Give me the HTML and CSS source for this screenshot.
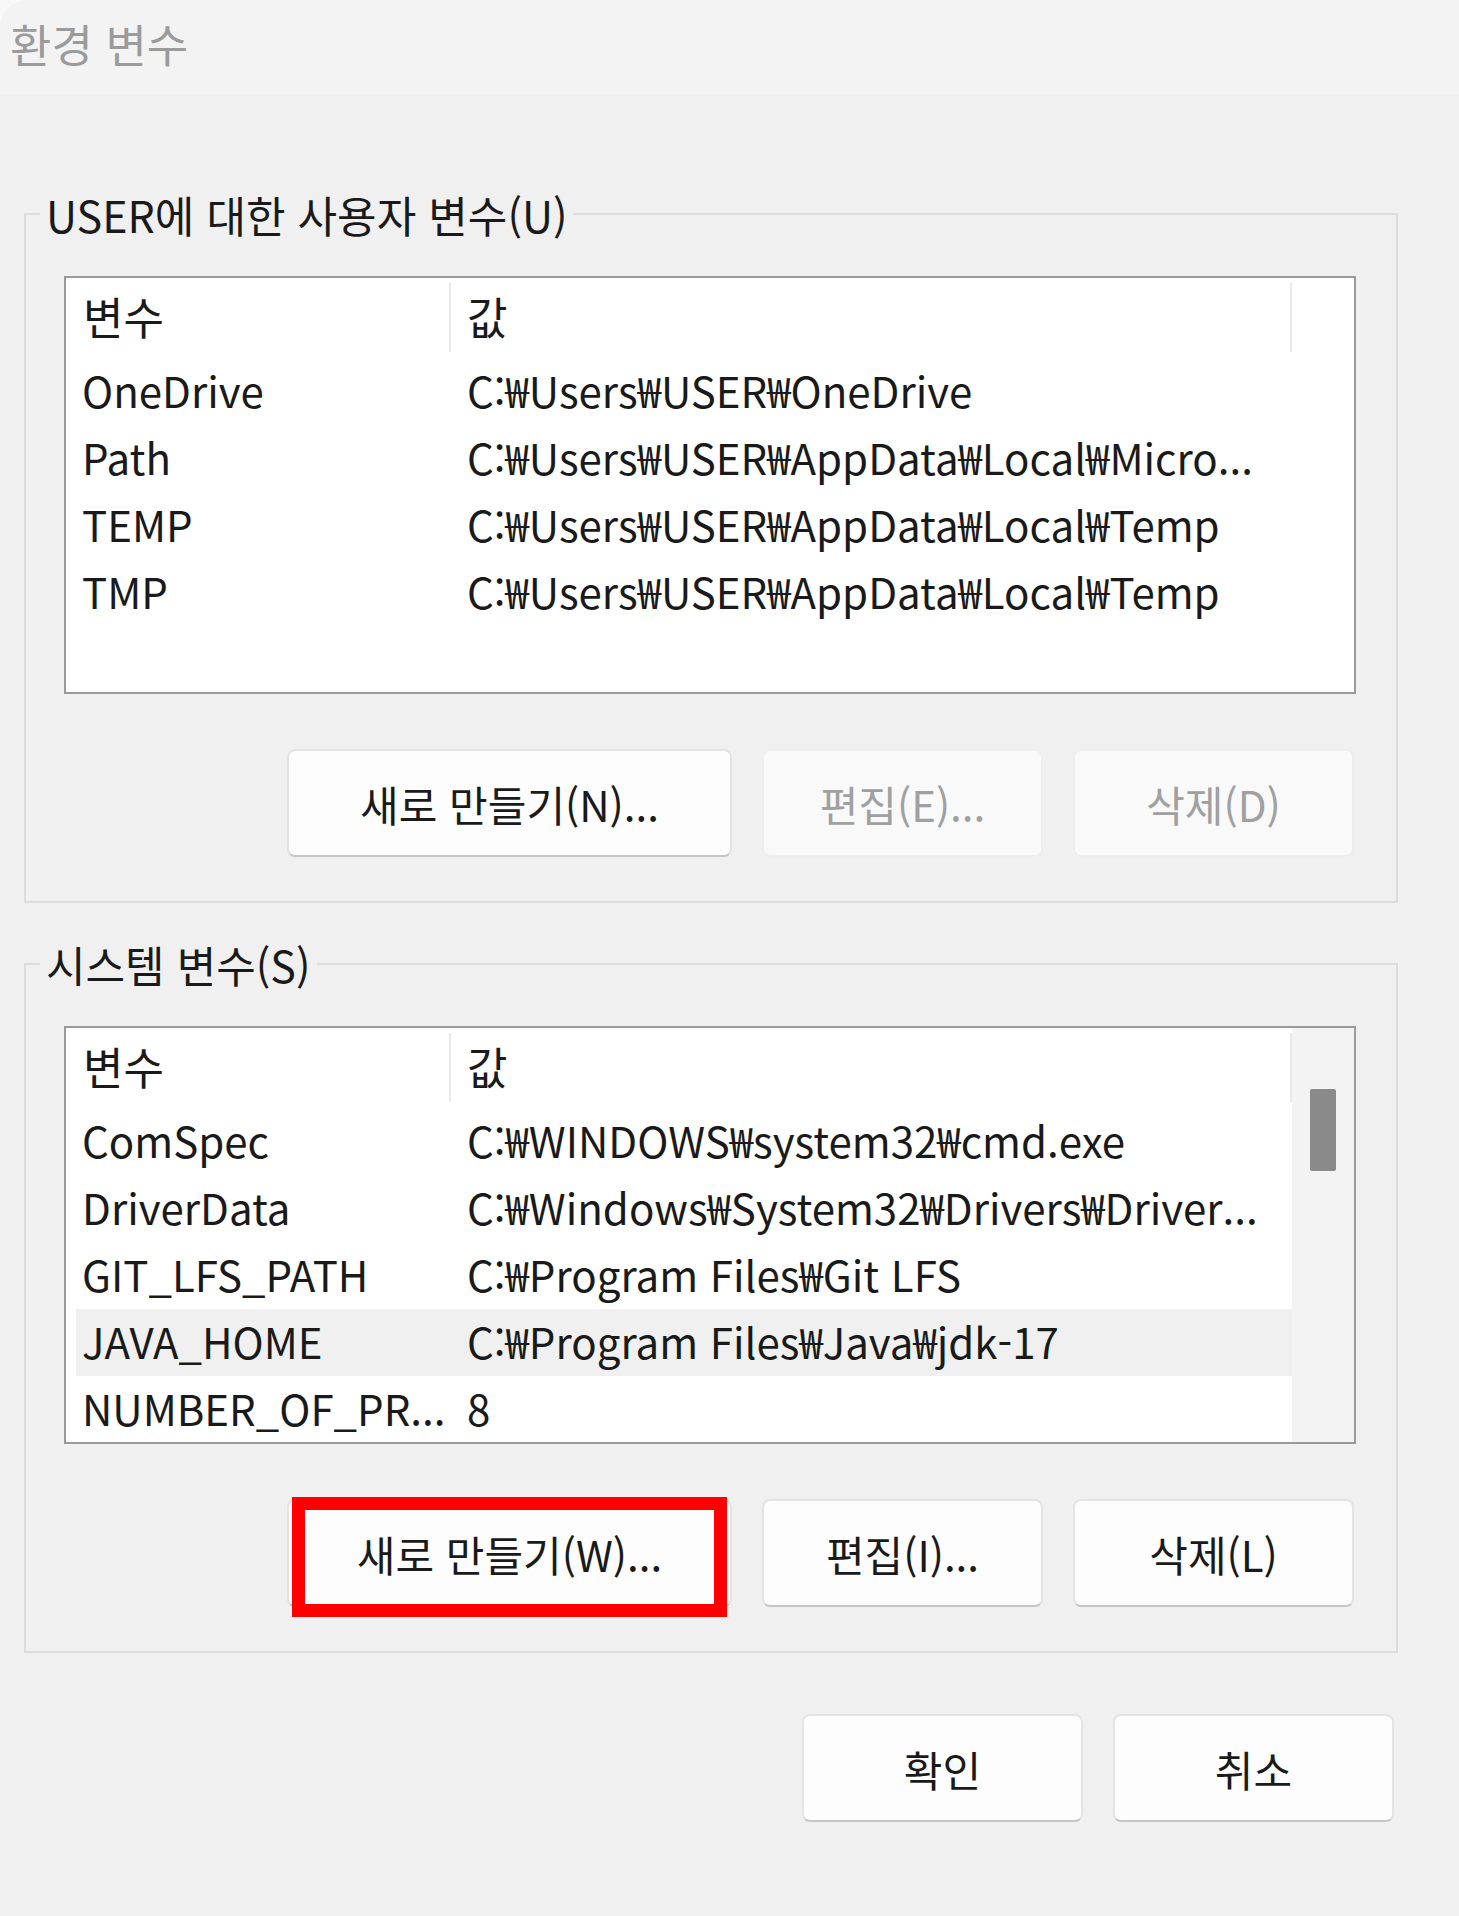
FILE: index.html
```html
<!DOCTYPE html>
<html lang="ko">
<head>
    <meta charset="UTF-8">
    <meta name="viewport" content="width=device-width, initial-scale=1.0">
    <title>환경 변수</title>
    <link rel="stylesheet" href="styles.css">
</head>
<body>
    <div class="window">
        <div class="titlebar">
            <span class="title">환경 변수</span>
        </div>

        <div class="dialog">
            <fieldset class="group group-user">
                <legend>USER에 대한 사용자 변수(U)</legend>
                <div class="listbox">
                    <div class="list-body">
                        <div class="list-header">
                            <div class="col-name">변수</div>
                            <div class="col-value">값</div>
                            <div class="col-rest"></div>
                        </div>
                        <div class="row"><div class="col-name">OneDrive</div><div class="col-value">C:₩Users₩USER₩OneDrive</div></div>
                        <div class="row"><div class="col-name">Path</div><div class="col-value">C:₩Users₩USER₩AppData₩Local₩Micro...</div></div>
                        <div class="row"><div class="col-name">TEMP</div><div class="col-value">C:₩Users₩USER₩AppData₩Local₩Temp</div></div>
                        <div class="row"><div class="col-name">TMP</div><div class="col-value">C:₩Users₩USER₩AppData₩Local₩Temp</div></div>
                    </div>
                </div>
                <div class="button-row">
                    <button class="btn btn-wide">새로 만들기(N)...</button>
                    <button class="btn" disabled>편집(E)...</button>
                    <button class="btn" disabled>삭제(D)</button>
                </div>
            </fieldset>

            <fieldset class="group group-system">
                <legend>시스템 변수(S)</legend>
                <div class="listbox">
                    <div class="list-body">
                        <div class="list-header">
                            <div class="col-name">변수</div>
                            <div class="col-value">값</div>
                        </div>
                        <div class="row"><div class="col-name">ComSpec</div><div class="col-value">C:₩WINDOWS₩system32₩cmd.exe</div></div>
                        <div class="row"><div class="col-name">DriverData</div><div class="col-value">C:₩Windows₩System32₩Drivers₩Driver...</div></div>
                        <div class="row"><div class="col-name">GIT_LFS_PATH</div><div class="col-value">C:₩Program Files₩Git LFS</div></div>
                        <div class="row selected"><div class="col-name">JAVA_HOME</div><div class="col-value">C:₩Program Files₩Java₩jdk-17</div></div>
                        <div class="row"><div class="col-name">NUMBER_OF_PR...</div><div class="col-value">8</div></div>
                    </div>
                    <div class="scrollbar">
                        <div class="thumb"></div>
                    </div>
                </div>
                <div class="button-row">
                    <button class="btn btn-wide">새로 만들기(W)...<span class="highlight"></span></button>
                    <button class="btn">편집(I)...</button>
                    <button class="btn">삭제(L)</button>
                </div>
            </fieldset>

            <div class="footer">
                <button class="btn">확인</button>
                <button class="btn">취소</button>
            </div>
        </div>
    </div>
</body>
</html>
```

FILE: styles.css
```css
* {
    box-sizing: border-box;
}

html {
    background: #f8f8f8;
}

body {
    margin: 0;
    font-family: "Noto Sans CJK KR", "Noto Sans", sans-serif;
    color: #1a1a1a;
}

.window {
    width: 1459px;
    height: 1916px;
    background: #f0f0f0;
    border-top-left-radius: 28px;
    overflow: hidden;
}

.titlebar {
    height: 95px;
    background: #f3f3f3;
    display: flex;
    align-items: center;
    padding: 0 0 8px 10px;
}

.title {
    font-size: 45px;
    color: #9b9b9b;
}

.dialog {
    padding: 0 61px 0 24px;
}

.group {
    margin: 0;
    border: 2px solid #dcdcdc;
    padding: 36px 40px 44px 38px;
}

.group legend {
    font-size: 43px;
    line-height: 52px;
    padding: 0 6px;
    margin-left: -24px;
}

.group-user {
    margin-top: 93px;
}

.group-system {
    margin-top: 35px;
}

.listbox {
    height: 418px;
    border: 2px solid #9a9a9a;
    background: #fff;
    display: flex;
    font-size: 42px;
}

.list-body {
    flex: 1;
    padding-left: 10px;
}

.list-header {
    display: flex;
    height: 80px;
    font-size: 44px;
}

.list-header > div {
    margin: 5px 0 6px;
    line-height: 67px;
    border-right: 2px solid #e8e8e8;
}

.list-header .col-rest {
    flex: 1;
    border-right: none;
}

.col-name {
    width: 375px;
    padding-left: 7px;
}

.col-value {
    width: 841px;
    padding-left: 16px;
}

.row {
    display: flex;
    height: 67px;
    line-height: 64px;
    white-space: nowrap;
}

.row .col-name {
    padding-left: 6px;
}

.row.selected {
    background: #f0f0f0;
}

.scrollbar {
    width: 62px;
    background: #f3f3f3;
    padding: 61px 0 0 18px;
}

.thumb {
    width: 26px;
    height: 82px;
    background: #8a8a8a;
    border-radius: 2px;
}

.button-row {
    display: flex;
    justify-content: flex-end;
    gap: 30px;
    margin: 55px 2px 0 0;
}

.btn {
    width: 281px;
    height: 108px;
    font-family: inherit;
    font-size: 42px;
    color: #1a1a1a;
    background: #fdfdfd;
    border: 2px solid #e3e3e3;
    border-bottom-color: #c6c6c6;
    border-radius: 8px;
    padding: 0;
}

.btn-wide {
    width: 445px;
    position: relative;
}

.btn:disabled {
    background: #f9f9f9;
    border-color: #eeeeee;
    color: #a0a0a0;
}

.highlight {
    position: absolute;
    left: 3px;
    right: 3px;
    top: -4px;
    bottom: -12px;
    border: 13px solid #ff0000;
}

.footer {
    display: flex;
    justify-content: flex-end;
    gap: 30px;
    margin: 61px 4px 0 0;
}
```
